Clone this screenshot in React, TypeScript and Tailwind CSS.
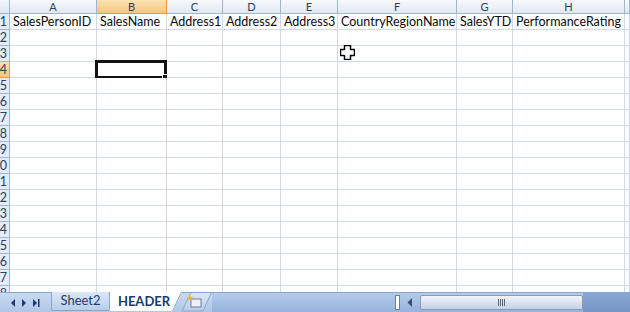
import React from 'react'

const cols = [
    { key: 'A', w: 'w-[87px]', text: 'SalesPersonID' },
    { key: 'B', w: 'w-[70px]', text: 'SalesName' },
    { key: 'C', w: 'w-[56px]', text: 'Address1' },
    { key: 'D', w: 'w-[58px]', text: 'Address2' },
    { key: 'E', w: 'w-[57px]', text: 'Address3' },
    { key: 'F', w: 'w-[119px]', text: 'CountryRegionName' },
    { key: 'G', w: 'w-[56px]', text: 'SalesYTD' },
    { key: 'H', w: 'w-[112px]', text: 'PerformanceRating' },
    { key: 'I', w: 'w-[5px]', text: '' },
]

const rows = Array.from({ length: 18 }, (_, i) => i + 1)

function ColumnHeader() {
    return (
        <div className="flex h-[14px] shrink-0">
            <div className="w-[10px] shrink-0 border-r border-b border-[#9eb6ce] bg-gradient-to-b from-[#f4f7fb] to-[#dfe6f0]"></div>
            {cols.map((c) => (
                <div
                    key={c.key}
                    className={
                        c.key === 'B'
                            ? `${c.w} shrink-0 border-r border-b border-[#f29536] bg-gradient-to-b from-[#fbe3b5] to-[#f6c67a] text-center text-[11px] leading-[13px] text-[#27415f]`
                            : `${c.w} shrink-0 border-r border-b border-[#9eb6ce] bg-gradient-to-b from-[#f7f9fc] to-[#e2e8f1] text-center text-[11px] leading-[13px] text-[#27415f]`
                    }
                >
                    {c.key !== 'I' ? c.key : ''}
                </div>
            ))}
        </div>
    )
}

function Row({ n }: { n: number }) {
    const active = n === 4
    return (
        <div className="flex h-[16px] shrink-0">
            <div
                className={
                    active
                        ? 'flex w-[10px] shrink-0 justify-end overflow-hidden whitespace-nowrap border-r border-b border-[#f29536] bg-gradient-to-b from-[#fbe3b5] to-[#f6c67a] pr-[2px] text-[12.5px] leading-[15px] text-[#27415f]'
                        : 'flex w-[10px] shrink-0 justify-end overflow-hidden whitespace-nowrap border-r border-b border-[#9eb6ce] bg-[#e4ecf7] pr-[2px] text-[12.5px] leading-[15px] text-[#27415f]'
                }
            >
                <span className="shrink-0">{n}</span>
            </div>
            {cols.map((c) => (
                <div
                    key={c.key}
                    className={`${c.w} relative shrink-0 whitespace-nowrap border-r border-b border-[#d0d7e5] bg-white pl-[3px] text-[12.5px] leading-[15px] text-[#0a0a0a]`}
                >
                    {n === 1 ? c.text : ''}
                    {active && c.key === 'B' && (
                        <div className="absolute -left-[2px] -top-[2px] h-[19px] w-[72px] border-[3px] border-[#111]">
                            <div className="absolute -bottom-[4px] -right-[4px] h-[6px] w-[6px] border border-white bg-[#111]"></div>
                        </div>
                    )}
                </div>
            ))}
        </div>
    )
}

function Cursor() {
    return (
        <svg className="absolute left-[340px] top-[45px]" width="15" height="15" viewBox="0 0 15 15">
            <path
                d="M4.5 0.5h6v4h4v6h-4v4h-6v-4h-4v-6h4z"
                fill="#fff"
                stroke="#000"
                strokeWidth="1.5"
                strokeLinejoin="round"
            />
        </svg>
    )
}

function TabBar() {
    return (
        <div className="flex h-[20px] shrink-0 border-t border-[#8ba6cc] bg-gradient-to-b from-[#c9daf2] to-[#b0c7e6]">
            <div className="flex w-[51px] shrink-0 items-center gap-[5px] pl-[10px]">
                <svg width="6" height="8" viewBox="0 0 6 8"><path d="M5 0v8L1 4z" fill="#1c3b6e" /></svg>
                <svg width="6" height="8" viewBox="0 0 6 8"><path d="M1 0v8l4-4z" fill="#1c3b6e" /></svg>
                <svg width="8" height="8" viewBox="0 0 8 8"><path d="M1 0v8l4-4z M6 0h1.5v8H6z" fill="#1c3b6e" /></svg>
            </div>
            <div className="-mt-[1px] flex h-[19px] w-[59px] shrink-0 items-center justify-center rounded-b-[2px] border border-t-0 border-[#8ba6cc] bg-gradient-to-b from-[#dce7f6] to-[#b9cdea] text-[13px] text-[#1c3b6e]">
                Sheet2
            </div>
            <div className="-mt-[1px] flex h-[19px] w-[62px] shrink-0 items-center justify-center bg-white pl-[6px] text-[13px] font-bold text-[#1c3b6e]">
                HEADER
            </div>
            <svg className="-mt-[1px] shrink-0" width="40" height="20" viewBox="0 0 40 20">
                <defs>
                    <linearGradient id="ntab" x1="0" y1="0" x2="0" y2="1">
                        <stop offset="0" stopColor="#dce7f6" />
                        <stop offset="1" stopColor="#b9cdea" />
                    </linearGradient>
                </defs>
                <path d="M0 0v19h1L10 0z" fill="#fff" />
                <path d="M0.5 19L9.5 0" stroke="#8ba6cc" />
                <path d="M10 19L19 0.5h20.5L31 19z" fill="url(#ntab)" stroke="#8ba6cc" />
                <rect x="19" y="7" width="10" height="8" fill="#eef2f8" stroke="#6c7f99" />
                <path d="M18 3l1 2 2 0-1.5 1.5 0.5 2-2-1-2 1 0.5-2L15 5h2z" fill="#f6b21a" />
            </svg>
            <div className="flex flex-1 items-center bg-gradient-to-b from-[#b5cbeb] to-[#97b3dc]">
                <div className="w-[183px] shrink-0"></div>
                <div className="h-[15px] w-[5px] shrink-0 border border-[#6a7f9e] bg-white"></div>
                <div className="flex w-[20px] shrink-0 items-center justify-center">
                    <svg width="6" height="9" viewBox="0 0 6 9"><path d="M5 0v9L0.5 4.5z" fill="#3a4f6e" /></svg>
                </div>
                <div className="flex h-[15px] w-[163px] shrink-0 items-center justify-center rounded-[2px] border border-[#8b9bb3] bg-gradient-to-b from-[#f2f5fa] to-[#c5d1e3]">
                    <svg width="8" height="7" viewBox="0 0 8 7"><path d="M0.5 0v7M2.5 0v7M4.5 0v7M6.5 0v7" stroke="#54657d" /></svg>
                </div>
                <div className="h-full flex-1 bg-gradient-to-b from-[#8aa8d4] to-[#7694c4]"></div>
            </div>
        </div>
    )
}

export default function App() {
    return (
        <div
            className="relative flex h-[312px] w-[630px] flex-col overflow-hidden bg-white"
            style={{ fontFamily: 'Lato, "Liberation Sans", sans-serif' }}
        >
            <div className="h-[292px] shrink-0 overflow-hidden">
                <ColumnHeader />
                {rows.map((n) => (
                    <Row key={n} n={n} />
                ))}
            </div>
            <TabBar />
            <Cursor />
        </div>
    )
}
